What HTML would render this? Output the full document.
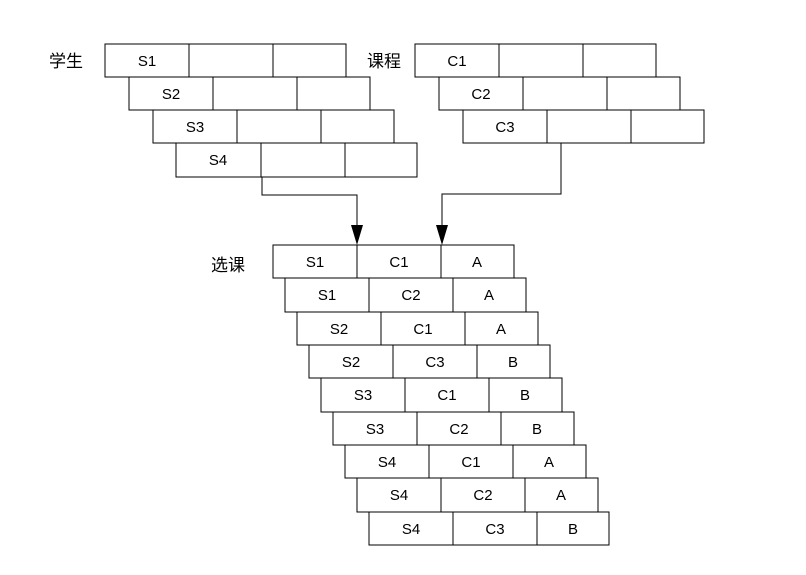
<!DOCTYPE html>
<html><head><meta charset="utf-8"><style>
html,body{margin:0;padding:0;background:#fff;width:806px;height:575px;overflow:hidden}
svg text{font-family:"Liberation Sans",Arial,sans-serif;font-size:15px;fill:#000}
svg text.c{font-family:"Liberation Sans","Noto Sans CJK SC",sans-serif;font-size:17px}
</style></head><body>
<svg width="806" height="575" viewBox="0 0 806 575" xmlns="http://www.w3.org/2000/svg">
<g fill="#fff" stroke="#000" stroke-width="1.3" shape-rendering="crispEdges">
<rect x="105" y="44" width="241" height="33"/><line x1="189" y1="44" x2="189" y2="77"/><line x1="273" y1="44" x2="273" y2="77"/>
<rect x="129" y="77" width="241" height="33"/><line x1="213" y1="77" x2="213" y2="110"/><line x1="297" y1="77" x2="297" y2="110"/>
<rect x="153" y="110" width="241" height="33"/><line x1="237" y1="110" x2="237" y2="143"/><line x1="321" y1="110" x2="321" y2="143"/>
<rect x="176" y="143" width="241" height="34"/><line x1="261" y1="143" x2="261" y2="177"/><line x1="345" y1="143" x2="345" y2="177"/>
<rect x="415" y="44" width="241" height="33"/><line x1="499" y1="44" x2="499" y2="77"/><line x1="583" y1="44" x2="583" y2="77"/>
<rect x="439" y="77" width="241" height="33"/><line x1="523" y1="77" x2="523" y2="110"/><line x1="607" y1="77" x2="607" y2="110"/>
<rect x="463" y="110" width="241" height="33"/><line x1="547" y1="110" x2="547" y2="143"/><line x1="631" y1="110" x2="631" y2="143"/>
<rect x="273" y="245" width="241" height="33"/><line x1="357" y1="245" x2="357" y2="278"/><line x1="441" y1="245" x2="441" y2="278"/>
<rect x="285" y="278" width="241" height="34"/><line x1="369" y1="278" x2="369" y2="312"/><line x1="453" y1="278" x2="453" y2="312"/>
<rect x="297" y="312" width="241" height="33"/><line x1="381" y1="312" x2="381" y2="345"/><line x1="465" y1="312" x2="465" y2="345"/>
<rect x="309" y="345" width="241" height="33"/><line x1="393" y1="345" x2="393" y2="378"/><line x1="477" y1="345" x2="477" y2="378"/>
<rect x="321" y="378" width="241" height="34"/><line x1="405" y1="378" x2="405" y2="412"/><line x1="489" y1="378" x2="489" y2="412"/>
<rect x="333" y="412" width="241" height="33"/><line x1="417" y1="412" x2="417" y2="445"/><line x1="501" y1="412" x2="501" y2="445"/>
<rect x="345" y="445" width="241" height="33"/><line x1="429" y1="445" x2="429" y2="478"/><line x1="513" y1="445" x2="513" y2="478"/>
<rect x="357" y="478" width="241" height="34"/><line x1="441" y1="478" x2="441" y2="512"/><line x1="525" y1="478" x2="525" y2="512"/>
<rect x="369" y="512" width="240" height="33"/><line x1="453" y1="512" x2="453" y2="545"/><line x1="537" y1="512" x2="537" y2="545"/>
</g>
<g fill="none" stroke="#000" stroke-width="1.3" shape-rendering="crispEdges">
<polyline points="262,177 262,195 357,195 357,228"/>
<polyline points="561,143 561,194 442,194 442,228"/>
</g>
<polygon points="351,225 363,225 357,245" fill="#000"/>
<polygon points="436,225 448,225 442,245" fill="#000"/>
<g text-anchor="middle">
<text x="147" y="66">S1</text>
<text x="171" y="99">S2</text>
<text x="195" y="132">S3</text>
<text x="218" y="165">S4</text>
<text x="457" y="66">C1</text>
<text x="481" y="99">C2</text>
<text x="505" y="132">C3</text>
<text x="315" y="267">S1</text><text x="399" y="267">C1</text><text x="477" y="267">A</text>
<text x="327" y="300">S1</text><text x="411" y="300">C2</text><text x="489" y="300">A</text>
<text x="339" y="334">S2</text><text x="423" y="334">C1</text><text x="501" y="334">A</text>
<text x="351" y="367">S2</text><text x="435" y="367">C3</text><text x="513" y="367">B</text>
<text x="363" y="400">S3</text><text x="447" y="400">C1</text><text x="525" y="400">B</text>
<text x="375" y="434">S3</text><text x="459" y="434">C2</text><text x="537" y="434">B</text>
<text x="387" y="467">S4</text><text x="471" y="467">C1</text><text x="549" y="467">A</text>
<text x="399" y="500">S4</text><text x="483" y="500">C2</text><text x="561" y="500">A</text>
<text x="411" y="534">S4</text><text x="495" y="534">C3</text><text x="573" y="534">B</text>
</g>
<text class="c" x="49" y="67">学生</text>
<text class="c" x="367" y="67">课程</text>
<text class="c" x="211" y="271">选课</text>
</svg>
</body></html>
